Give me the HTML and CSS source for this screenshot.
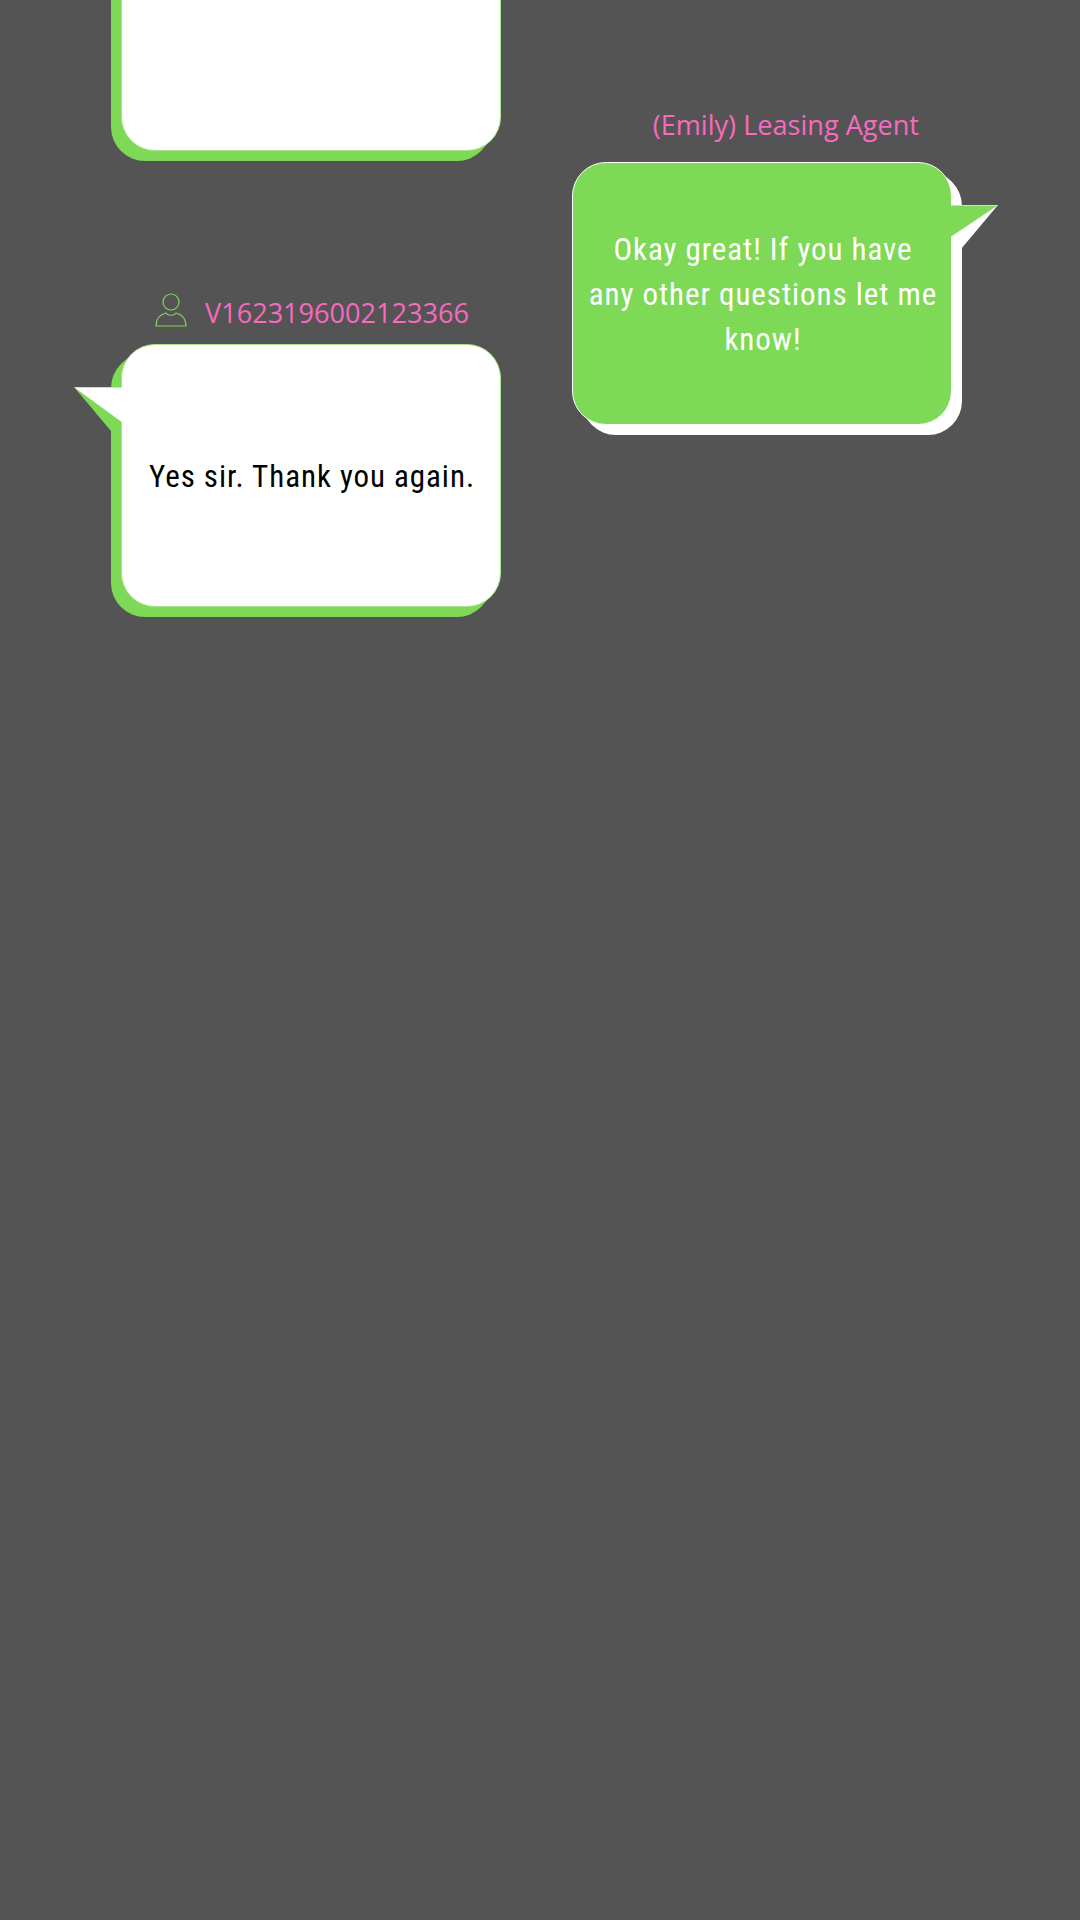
FILE: index.html
```html
<!DOCTYPE html>
<html lang="en">
<head>
    <meta charset="UTF-8">
    <meta name="viewport" content="width=device-width, initial-scale=1.0">
    <title>Chat</title>
    <link rel="stylesheet" href="styles.css">
</head>
<body>
    <div class="chat">
        <div class="column column-left">
            <div class="bubble bubble-visitor bubble-previous"></div>
            <div class="message-label label-visitor">
                <svg class="user-icon" width="34" height="34" viewBox="0 0 34 34">
                    <circle cx="17" cy="9" r="8"/>
                    <path d="M2 33C2 26 6 21.500 12 20C14 23 20 23 22 20C28 21.500 32 26 32 33Z"/>
                </svg>
                <span>V1623196002123366</span>
            </div>
            <div class="bubble bubble-visitor">
                <svg class="tail tail-left" width="50" height="46" viewBox="0 0 50 46">
                    <polygon class="tail-shadow" points="0,0 37,44 37,0"/>
                    <polygon class="tail-face" points="0.500,0.500 49,0.500 49,36"/>
                </svg>
                <p>Yes sir. Thank you again.</p>
            </div>
        </div>
        <div class="column column-right">
            <div class="message-label label-agent">
                <span>(Emily) Leasing Agent</span>
            </div>
            <div class="bubble bubble-agent">
                <svg class="tail tail-right" width="50" height="46" viewBox="0 0 50 46">
                    <polygon class="tail-shadow" points="50,0 13,44 13,0"/>
                    <polygon class="tail-face" points="49.500,0.500 1,0.500 1,33"/>
                </svg>
                <p>Okay great! If you have any other questions let me know!</p>
            </div>
        </div>
    </div>
</body>
</html>
```

FILE: styles.css
```css
html, body {
    margin: 0;
    height: 100%;
}

body {
    background-color: #545454;
    overflow: hidden;
}

.chat {
    display: flex;
    align-items: flex-start;
    gap: 71px;
    padding-left: 121px;
}

.column {
    display: flex;
    flex-direction: column;
    width: 380px;
}

.column-left {
    margin-top: -112px;
}

.column-right {
    margin-top: 104px;
}

.message-label {
    display: flex;
    align-items: center;
    gap: 17px;
    height: 40px;
    font-family: "Open Sans", sans-serif;
    font-size: 27.1px;
    color: #f76abf;
}

.label-visitor {
    margin-top: 141px;
    margin-bottom: 12px;
    padding-left: 33px;
}

.label-agent {
    justify-content: flex-end;
    margin-bottom: 18px;
    padding-right: 33px;
}

.user-icon {
    margin-bottom: 4px;
    fill: none;
    stroke: #7ed957;
    stroke-width: 1.2;
}

.bubble {
    position: relative;
    box-sizing: border-box;
    display: flex;
    align-items: center;
    justify-content: center;
    width: 380px;
    height: 263px;
    padding: 2px 13px 0 15px;
    border-radius: 34px;
    text-align: center;
    font-family: "Roboto", sans-serif;
    font-stretch: 75%;
    font-size: 31px;
    line-height: 45px;
    letter-spacing: 0.95px;
}

.bubble p {
    margin: 0;
}

.bubble-visitor {
    background-color: #fff;
    border: 1px solid #a9e48f;
    box-shadow: -10px 10px 0 #7ed957;
    color: #000;
}

.bubble-agent {
    background-color: #7ed957;
    border: 1px solid #fff;
    box-shadow: 10px 10px 0 #fff;
    color: #fff;
}

.tail {
    position: absolute;
    top: 42px;
}

.tail-left {
    left: -48px;
}

.tail-right {
    right: -47px;
}

.bubble-visitor .tail-shadow {
    fill: #7ed957;
}

.bubble-visitor .tail-face {
    fill: #fff;
}

.bubble-agent .tail-shadow {
    fill: #fff;
}

.bubble-agent .tail-face {
    fill: #7ed957;
}
```
